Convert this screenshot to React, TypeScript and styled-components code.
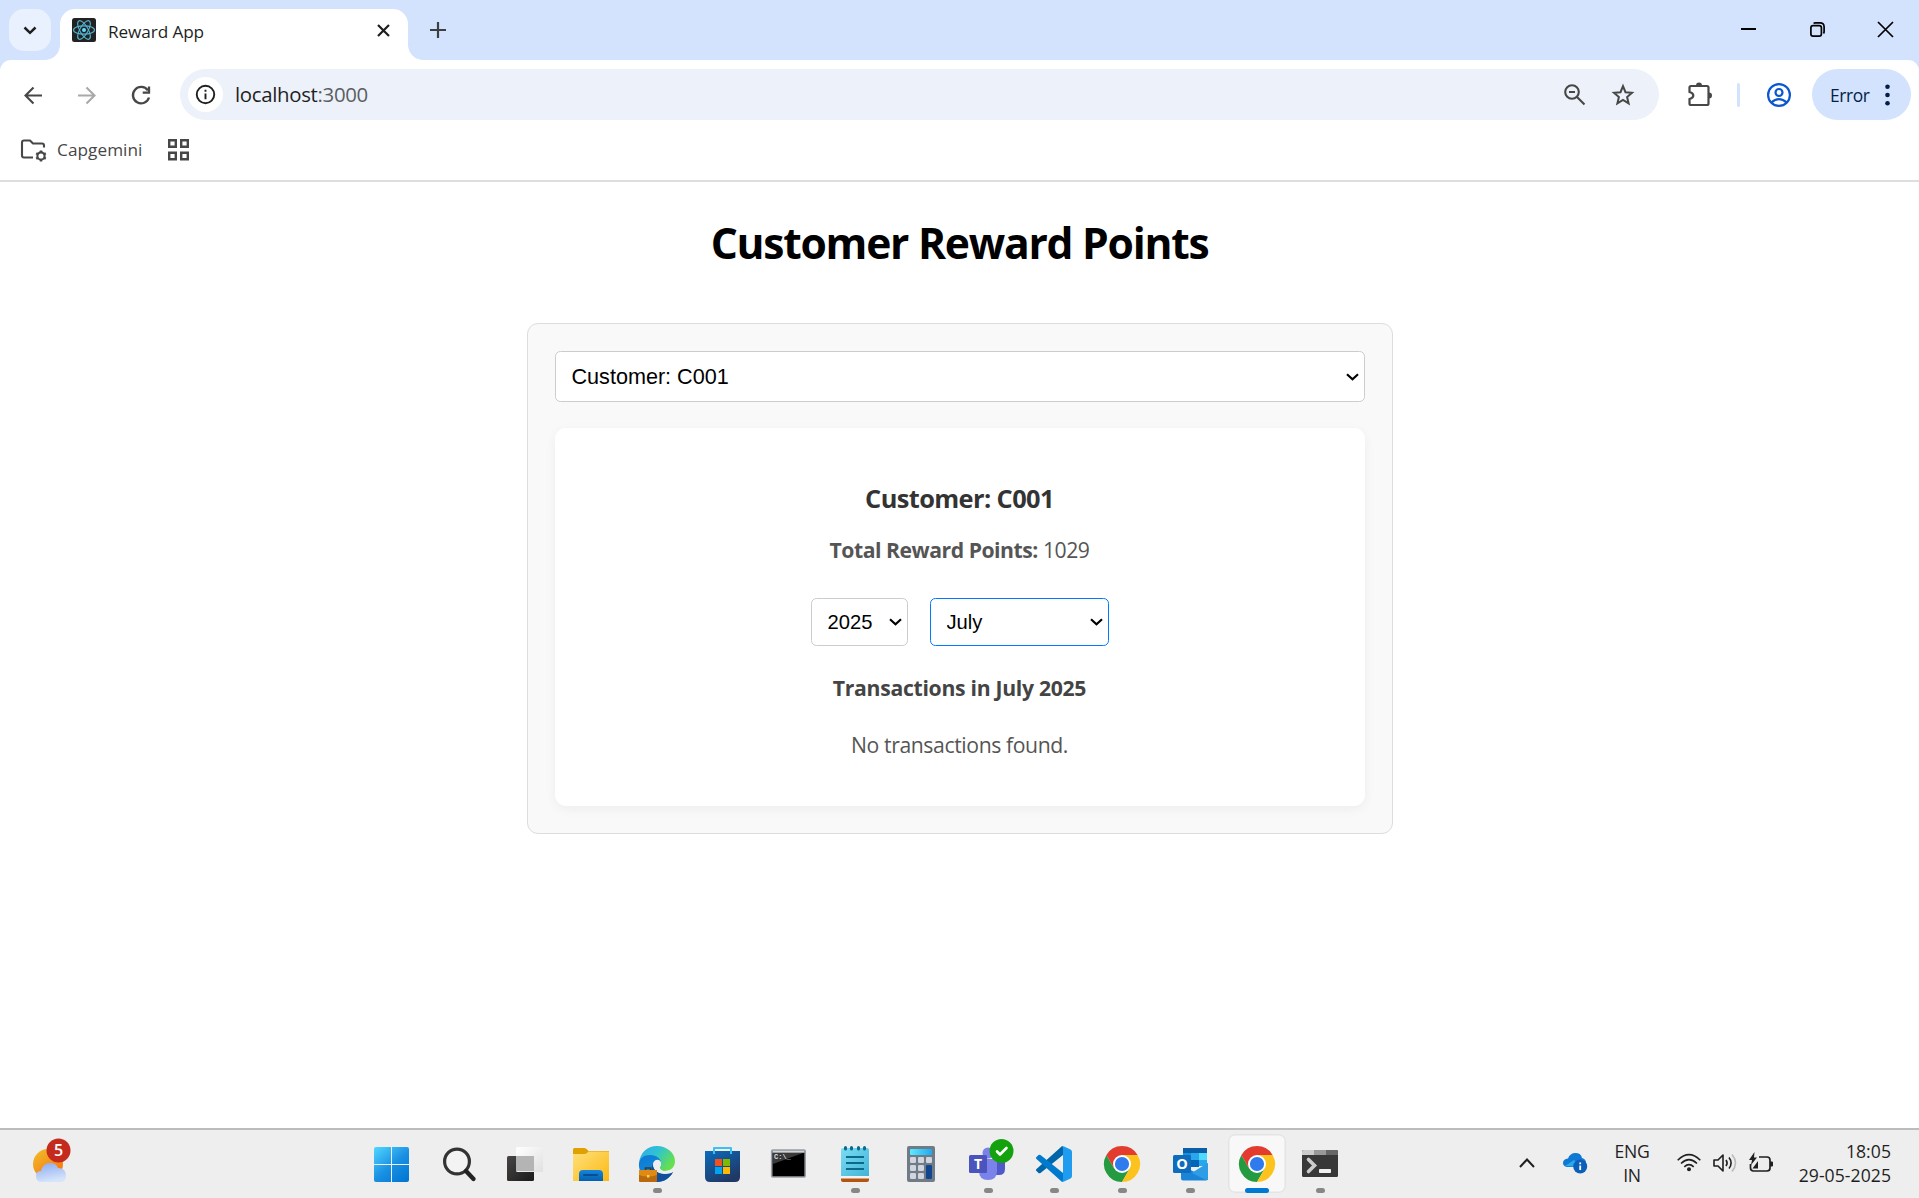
import React from "react";
import styled, { createGlobalStyle } from "styled-components";

const GlobalStyle = createGlobalStyle`
  * { box-sizing: border-box; }
  html, body { margin: 0; padding: 0; background: #fff; }
  body { overflow: hidden; }
  svg { display: block; flex: none; overflow: visible; }
`;

const ui = `"Open Sans", "Noto Sans", sans-serif`;

const Screen = styled.div`
  width: 1919px;
  height: 1198px;
  display: flex;
  flex-direction: column;
  font-family: ${ui};
  background: #fff;
`;

const Text = styled.span<{ $size: number; $track?: number; $color?: string }>`
  font-size: ${(p) => p.$size}px;
  letter-spacing: ${(p) => p.$track ?? 0}px;
  color: ${(p) => p.$color ?? "#1f1f1f"};
  white-space: nowrap;
`;

/* ---------- Browser chrome ---------- */

const TabStrip = styled.div`
  height: 60px;
  flex: none;
  display: flex;
  background: #d3e3fd;
  padding-left: 9px;
`;

const TabSearch = styled.div`
  width: 42px;
  height: 42px;
  margin: 9px -6px 0 0;
  border-radius: 15px;
  background: #e9f1fe;
  display: grid;
  place-items: center;
`;

const Flare = styled.div<{ $side: "left" | "right" }>`
  width: 15px;
  height: 15px;
  align-self: flex-end;
  background: radial-gradient(
    circle at ${(p) => (p.$side === "left" ? "0 0" : "100% 0")},
    transparent 14.5px,
    #fff 15.2px
  );
`;

const Tab = styled.div`
  width: 348px;
  height: 51px;
  margin-top: 9px;
  padding: 0 18px 9px 12px;
  display: flex;
  align-items: center;
  background: #fff;
  border-radius: 15px 15px 0 0;
`;

const TabTitle = styled(Text)`
  flex: 1;
  margin-left: 12px;
  line-height: 24px;
  padding-top: 3px;
`;

const NewTab = styled.div`
  margin: 22px auto 0 7px;
`;

const WindowControls = styled.div`
  display: flex;
  gap: 53px;
  margin: 22px 26px 0 0;
  > :first-child {
    margin-right: 1px;
  }
`;

const ToolbarShell = styled.div`
  flex: none;
  background: linear-gradient(#d3e3fd 12px, #fff 12px);
`;

const Toolbar = styled.div`
  height: 69px;
  display: flex;
  align-items: center;
  padding: 0 8px 0 21px;
  background: #fff;
  border-radius: 11px 11px 0 0;
`;

const NavButtons = styled.div`
  display: flex;
  gap: 30px;
  width: 159px;
`;

const AddressBar = styled.div`
  width: 1479px;
  height: 51px;
  margin-right: 28px;
  border-radius: 26px;
  background: #ecf1fa;
  display: flex;
  align-items: center;
  padding: 0 24px 0 8px;
`;

const SiteInfo = styled.div`
  width: 35px;
  height: 35px;
  border-radius: 50%;
  background: #fff;
  display: grid;
  place-items: center;
  margin-right: 12px;
`;

const Url = styled(Text)`
  flex: 1;
  line-height: 26px;
  padding-bottom: 2px;
  em {
    font-style: normal;
    color: #5b5e63;
  }
`;

const AddressActions = styled.div`
  display: flex;
  gap: 24px;
`;

const Divider = styled.div`
  width: 3px;
  height: 24px;
  border-radius: 2px;
  background: #d3e3fd;
  margin: 0 27px 0 24px;
`;

const ErrorPill = styled.div`
  width: 99px;
  height: 51px;
  margin-left: 21px;
  border-radius: 26px;
  background: #d3e3fd;
  display: flex;
  align-items: center;
  padding: 0 21px 0 18px;
  justify-content: space-between;
`;

const Bookmarks = styled.div`
  height: 53px;
  flex: none;
  display: flex;
  align-items: center;
  padding: 0 0 10px 20px;
  border-bottom: 2px solid #dedede;
`;

const BookmarkLabel = styled(Text)`
  margin: 0 25px 0 10px;
  width: 86px;
`;

/* ---------- Page ---------- */

const Page = styled.main`
  flex: 1;
  display: flex;
  flex-direction: column;
  align-items: center;
`;

const Title = styled.h1`
  margin: 30px 0 0;
  font-size: 42.6px;
  line-height: 60px;
  letter-spacing: -1.25px;
  font-weight: 700;
  color: #000;
  white-space: nowrap;
`;

const Panel = styled.section`
  width: 866px;
  height: 511px;
  margin-top: 51px;
  padding: 27px;
  background: #f9f9f9;
  border: 1px solid #ddd;
  border-radius: 11px;
`;

const Card = styled.div`
  height: 378px;
  margin-top: 26px;
  border-radius: 11px;
  background: #fff;
  box-shadow: 0 3px 11px rgba(0, 0, 0, 0.05);
  display: flex;
  flex-direction: column;
  align-items: center;
`;

const CardHeading = styled.h2`
  margin: 52px 0 0;
  font-size: 25.4px;
  line-height: 36px;
  letter-spacing: -0.6px;
  font-weight: 700;
  color: #333;
  white-space: nowrap;
`;

const Total = styled.p`
  margin: 19px 0 0;
  font-size: 21.2px;
  line-height: 30px;
  letter-spacing: -0.48px;
  color: #555;
  white-space: nowrap;
`;

const Filters = styled.div`
  display: flex;
  gap: 22px;
  margin: 33px 0 0;
`;

const SubHeading = styled.h3`
  margin: 27px 0 0;
  font-size: 21.2px;
  line-height: 30px;
  letter-spacing: -0.3px;
  color: #444;
  white-space: nowrap;
`;

const Empty = styled.p`
  margin: 27px 0 0;
  font-size: 21.2px;
  line-height: 30px;
  letter-spacing: -0.4px;
  color: #555;
  white-space: nowrap;
`;

const SelectBox = styled.div<{ $w: number; $h: number }>`
  display: grid;
  width: ${(p) => p.$w}px;
  height: ${(p) => p.$h}px;
  align-items: center;
  > * {
    grid-area: 1 / 1;
  }
  > svg {
    justify-self: end;
    margin-right: 6px;
    pointer-events: none;
  }
`;

const Select = styled.select<{ $size: number; $active?: boolean }>`
  appearance: none;
  width: 100%;
  height: 100%;
  padding: 0 16px;
  border: 1px solid ${(p) => (p.$active ? "#007bff" : "#ccc")};
  border-radius: 5.4px;
  background: #fff;
  color: #000;
  font-family: "Liberation Sans", Arial, sans-serif;
  font-size: ${(p) => p.$size}px;
`;

const Dropdown = ({ w, h, size, value, active }: { w: number; h: number; size: number; value: string; active?: boolean }) => (
  <SelectBox $w={w} $h={h}>
    <Select $size={size} $active={active} defaultValue={value}>
      <option>{value}</option>
    </Select>
    <svg width="13" height="8" viewBox="0 0 13 8" fill="none" stroke="#000" strokeWidth="2.2">
      <path d="M1 1.2 6.5 6.2 12 1.2" />
    </svg>
  </SelectBox>
);

/* ---------- Taskbar ---------- */

const Taskbar = styled.footer`
  height: 70px;
  flex: none;
  display: flex;
  background: #eee;
  border-top: 2px solid #bcbcbc;
`;

const Weather = styled.div`
  width: 363px;
  padding: 8px 0 0 32px;
`;

const Apps = styled.div`
  display: flex;
  width: 1156px;
  padding-top: 4px;
`;

const Slot = styled.div<{ $gap: number; $active?: boolean }>`
  width: 58px;
  height: 59px;
  margin-right: ${(p) => p.$gap}px;
  display: flex;
  flex-direction: column;
  align-items: center;
  justify-content: space-between;
  padding-top: 12px;
  border-radius: 7px;
  background: ${(p) => (p.$active ? "#f8f8f8" : "transparent")};
  box-shadow: ${(p) => (p.$active ? "inset 0 0 0 1.5px #e4e4e4" : "none")};
`;

const Indicator = styled.div<{ $kind: "none" | "open" | "focus" }>`
  width: ${(p) => (p.$kind === "focus" ? 24 : 9)}px;
  height: 5px;
  border-radius: 3px;
  background: ${(p) => (p.$kind === "none" ? "transparent" : p.$kind === "focus" ? "#0078d4" : "#878787")};
`;

const Tray = styled.div`
  flex: 1;
  display: flex;
  align-items: center;
  padding-bottom: 2px;
`;

const TrayStack = styled.div<{ $w: number; $align: string; $ml: number }>`
  width: ${(p) => p.$w}px;
  margin-left: ${(p) => p.$ml}px;
  padding-top: 1px;
  display: flex;
  flex-direction: column;
  align-items: ${(p) => p.$align};
  line-height: 23.5px;
`;

const TrayIcon = styled.svg<{ $ml: number }>`
  margin-left: ${(p) => p.$ml}px;
`;

const I = ({ children }: { children: React.ReactNode }) => (
  <svg width="36" height="36" viewBox="0 0 36 36">{children}</svg>
);

const Windows = () => (
  <I>
    <defs>
      <linearGradient id="win" gradientUnits="userSpaceOnUse" x1="1" y1="1" x2="30" y2="36">
        <stop offset="0" stopColor="#4fd5ff" /><stop offset=".55" stopColor="#1a90e2" /><stop offset="1" stopColor="#0078d4" />
      </linearGradient>
    </defs>
    <path fill="url(#win)" d="M2 1h15v17H0V3q0-2 2-2zM18 1h15q2 0 2 2v15H18zM0 19h17v17H2q-2 0-2-2zM18 19h17v15q0 2-2 2H18z" />
  </I>
);

const Search = () => (
  <I>
    <circle cx="16" cy="15.5" r="12.4" fill="#f3f3f3" stroke="#333" strokeWidth="3.2" />
    <path d="m25 25 7.5 8" stroke="#222" strokeWidth="4.4" strokeLinecap="round" />
  </I>
);

const TaskView = () => (
  <I>
    <defs>
      <linearGradient id="tvd" x2="1" y2="1"><stop stopColor="#484644" /><stop offset="1" stopColor="#1b1b1b" /></linearGradient>
      <linearGradient id="tvl" x2="1" y2="1"><stop stopColor="#fff" /><stop offset="1" stopColor="#e0e0e0" /></linearGradient>
    </defs>
    <rect y="10" width="27" height="25" rx="1.5" fill="url(#tvd)" />
    <rect x="9" y="1" width="27" height="25" rx="1.5" fill="url(#tvl)" />
    <path d="M9 10h18v15H9z" fill="#b4b4b4" />
  </I>
);

const Explorer = () => (
  <I>
    <defs>
      <linearGradient id="exf" x2="1" y2="1"><stop stopColor="#ffe07a" /><stop offset="1" stopColor="#fbb914" /></linearGradient>
      <linearGradient id="exb" y2="1" x2="0"><stop stopColor="#1585dc" /><stop offset="1" stopColor="#0561b0" /></linearGradient>
    </defs>
    <path d="M0 3.5Q0 2 1.5 2h9.5q1.5 0 2.5 1l2 2H36v10H0z" fill="#dfa000" />
    <path d="M0 8h11q2 0 3-1l1.5-1.500H36V35H0z" fill="url(#exf)" />
    <path d="M6 35v-7q0-4 4-4h16q4 0 4 4v7z" fill="url(#exb)" />
    <path d="M11 29h13" stroke="#064f91" strokeWidth="2" strokeLinecap="round" />
  </I>
);

const Edge = () => (
  <I>
    <defs>
      <linearGradient id="edt" x2="1" y2=".5"><stop stopColor="#2fa8e8" /><stop offset=".5" stopColor="#2fc2d4" /><stop offset="1" stopColor="#66e04e" /></linearGradient>
      <linearGradient id="edl" x2=".6" y2="1"><stop stopColor="#1078d0" /><stop offset="1" stopColor="#0c94e4" /></linearGradient>
    </defs>
    <path d="M0 17C1 7 8 0 18 0s18 7 18 15c0 6-4 10-10 10-4 0-6-2-5-4 1-1 1-2 1-3 0-4-4-8-10-8C6 10 1 13 0 17z" fill="url(#edt)" />
    <path d="M0 17c1-5 5-8 11-8 7 0 11 4 11 8-1-3-7-4-8 1-1 6 5 10 12 10 4 0 7-1 8-2-3 6-9 10-16 10C8 36-1 28 0 17z" fill="url(#edl)" />
    <path d="M14 18c0 7 6 10 12 10 4 0 7-1 8-2-3 6-9 10-16 10-5 0-8-10-4-18z" fill="#104f9c" />
    <path d="M14.500 17c1-4 6-4 7.200-1 .6 2-.2 3.500-.7 4.500-.8 2.500 2 4.500 5 4.500 3 0 6-1 8-3l.3 3c-2 1.700-5 2.700-8.300 2.700-7 0-12.500-4-11.500-10.700z" fill="#eee" />
    <rect y="24" width="18" height="12" rx="1" fill="#b96a0c" />
    <path d="M0 24h18v5q-9 3-18 0z" fill="#e08a16" />
    <path d="M6.5 24v-2h5v2" stroke="#4b3620" strokeWidth="1.5" fill="none" />
    <path d="M8 29h2.4v2.5H8z" fill="#ffd45a" />
  </I>
);

const Store = () => (
  <I>
    <defs>
      <linearGradient id="sto" x2=".6" y2="1"><stop stopColor="#0a6cbd" /><stop offset="1" stopColor="#203864" /></linearGradient>
    </defs>
    <path d="M9 8V2h17v6" fill="none" stroke="#3cc0f3" strokeWidth="2" strokeLinejoin="round" />
    <path d="M0 5h35v26q0 5-5 5H5q-5 0-5-5z" fill="url(#sto)" />
    <path d="M9 8V4.5M26 8V4.5" stroke="#3cc0f3" strokeWidth="2" />
    <path d="M10 13h7v7h-7z" fill="#f25022" /><path d="M18 13h7v7h-7z" fill="#7fba00" />
    <path d="M10 21h7v7h-7z" fill="#00a4ef" /><path d="M18 21h7v7h-7z" fill="#ffb900" />
  </I>
);

const Mono = styled.text`
  font-family: "Liberation Mono", monospace;
  font-weight: 700;
  font-size: 7px;
  fill: #ddd;
`;

const Cmd = () => (
  <I>
    <rect x=".7" y="4" width="33.5" height="27" rx="1" fill="#000" stroke="#9aa0a6" strokeWidth="1.6" />
    <path d="M1.5 4.5h32v2.2h-32z" fill="#cfd4d8" />
    <path d="M2 7h30L2 18z" fill="#3a3a3a" />
    <Mono x="3" y="13">C:\_</Mono>
  </I>
);

const Notepad = () => (
  <I>
    <defs><linearGradient id="npd" x2="1" y2="1"><stop stopColor="#7cdcf4" /><stop offset="1" stopColor="#42b4d6" /></linearGradient></defs>
    <path d="M4 31h28v3q0 2-2 2H6q-2 0-2-2z" fill="#b5540f" />
    <path d="M4 29h28v3.5H4z" fill="#f3f3f3" />
    <path d="M4 4q0-2 2-2h24q2 0 2 2v26H4z" fill="url(#npd)" />
    <path d="M9 11h18M9 17h18M9 23h18" stroke="#0b6a8c" strokeWidth="2" />
    <path d="M8.5 1.5v1.5M14.5 1.5v1.5M21.5 1.5v1.5M27.5 1.5v1.5" stroke="#0b6a8c" strokeWidth="3" strokeLinecap="round" />
  </I>
);

const Calculator = () => (
  <I>
    <defs><linearGradient id="cal" x2="1"><stop stopColor="#5deaff" /><stop offset="1" stopColor="#22a8ec" /></linearGradient></defs>
    <rect x="4" width="28" height="36" rx="2" fill="#6f7b85" />
    <rect x="7" y="3" width="22" height="6" rx="1" fill="url(#cal)" />
    {[7, 15, 23].map((x) => [11, 19, 27].map((y) => (x === 23 && y > 11 ? null : <rect key={`${x}-${y}`} x={x} y={y} width="6" height="6" rx="1.2" fill="#d0d5e0" />)))}
    <rect x="23" y="19" width="6" height="14" rx="1.2" fill="#11468f" />
  </I>
);

const Glyph = styled.text<{ $size: number }>`
  font-family: ${ui};
  font-weight: 700;
  font-size: ${(p) => p.$size}px;
  fill: #fff;
  text-anchor: middle;
`;

const Teams = () => (
  <I>
    <circle cx="29" cy="9" r="4" fill="#5059c9" />
    <circle cx="18" cy="7" r="5.5" fill="#7b83eb" />
    <path d="M22 13h13v10q0 6-6 6h-7z" fill="#5059c9" />
    <path d="M9 13h18v12q0 9-9 9t-9-9z" fill="#7b83eb" />
    <rect x="-1" y="9" width="18" height="18" rx="1.5" fill="#4b53bc" />
    <Glyph $size={14} x="8" y="23">T</Glyph>
    <circle cx="31.5" cy="5" r="12" fill="#13a10e" />
    <path d="m27 5.5 3 3 6.5-6.5" fill="none" stroke="#fff" strokeWidth="2.6" strokeLinecap="round" strokeLinejoin="round" />
  </I>
);

const VsCode = () => (
  <I>
    <path d="M0 24.5 2.5 27q1 .7 2 0L27 9V0q-1 0-2 1L.5 23q-.8.8-.5 1.5z" fill="#0065a9" />
    <path d="M0 11.5 2.5 9q1-.7 2 0L27 27v9q-1 0-2-1L.5 13q-.8-.8-.5-1.5z" fill="#007acc" />
    <path d="M25 35.2q1.5 1.2 3 .4l6.5-3.2q1.5-.8 1.5-2.400V6q0-1.600-1.500-2.400L28 .4Q26.5-.4 25 .8q2-.6 2 1.600v31.200q0 2.200-2 1.600z" fill="#1f9cf0" />
  </I>
);

const Chrome = () => (
  <I>
    <path d="M2.410 9A18 18 0 0 1 33.590 9L18 18z" fill="#e33b2e" />
    <path d="M2.410 9A18 18 0 0 0 18 36L25.800 22.500 10.200 22.500z" fill="#249a41" />
    <path d="M33.590 9A18 18 0 0 1 18 36L25.800 22.500 18 9z" fill="#fcc31e" />
    <path d="M2.410 9 10.200 22.500 18 9z" fill="#e33b2e" />
    <circle cx="18" cy="18" r="9" fill="#fff" />
    <circle cx="18" cy="18" r="7.1" fill="#2f7bee" />
  </I>
);

const Outlook = () => (
  <I>
    <path d="M11 2h24v17H11z" fill="#1490df" />
    <path d="M11 2h24v5H11z" fill="#0a5ea8" />
    <path d="M19 7h8v7h-8z" fill="#28a8ea" /><path d="M27 7h8v7h-8z" fill="#50d9ff" />
    <path d="M11 14h16v7H11z" fill="#0364b8" /><path d="M27 14h8v6h-8z" fill="#28a8ea" />
    <path d="m36 17-18 11L36 34z" fill="#3aa7e8" />
    <path d="M9 19l27 14q-1 1.500-2 1.500H11q-2 0-2-2z" fill="#1a85d8" />
    <path d="M36 17v15q0 2-2 2L20 27z" fill="#2f9de6" />
    <rect x="1" y="9" width="18" height="18" rx="1.5" fill="#0f6cbd" />
    <Glyph $size={14.5} x="10" y="23.3">O</Glyph>
  </I>
);

const Terminal = () => (
  <I>
    <rect y="4" width="36" height="27" rx="1.5" fill="#383838" />
    <path d="M0 9V5.5Q0 4 1.5 4H12v5z" fill="#ccc" /><path d="M12 4h12v5H12z" fill="#999" /><path d="M24 4h10.5Q36 4 36 5.5V9H24z" fill="#666" />
    <path d="m6.5 13.5 6 6-6 6" fill="none" stroke="#ccc" strokeWidth="3.6" strokeLinecap="round" />
    <rect x="17" y="23" width="12" height="4" rx=".8" fill="#f0f0f0" />
  </I>
);

type TaskbarApp = { icon: React.ReactNode; gap: number; kind: "none" | "open" | "focus" };

const apps: TaskbarApp[] = [
  { icon: <Windows />, gap: 9, kind: "none" },
  { icon: <Search />, gap: 8, kind: "none" },
  { icon: <TaskView />, gap: 8, kind: "none" },
  { icon: <Explorer />, gap: 8, kind: "none" },
  { icon: <Edge />, gap: 8, kind: "open" },
  { icon: <Store />, gap: 8, kind: "none" },
  { icon: <Cmd />, gap: 8, kind: "none" },
  { icon: <Notepad />, gap: 8, kind: "open" },
  { icon: <Calculator />, gap: 9, kind: "none" },
  { icon: <Teams />, gap: 8, kind: "open" },
  { icon: <VsCode />, gap: 10, kind: "open" },
  { icon: <Chrome />, gap: 10, kind: "open" },
  { icon: <Outlook />, gap: 9, kind: "open" },
  { icon: <Chrome />, gap: 5, kind: "focus" },
  { icon: <Terminal />, gap: 0, kind: "open" },
];

const ReactLogo = () => (
  <svg width="24" height="24" viewBox="0 0 24 24">
    <rect width="24" height="24" rx="2.5" fill="#222" />
    <g fill="none" stroke="#53b7d3" strokeWidth="1.1">
      {[0, 60, 120].map((a) => <ellipse key={a} cx="12" cy="12" rx="10.5" ry="4.1" transform={`rotate(${a} 12 12)`} />)}
    </g>
    <circle cx="12" cy="12" r="2" fill="#61dafb" />
  </svg>
);

export default function App() {
  return (
    <Screen>
      <GlobalStyle />
      <TabStrip>
        <TabSearch>
          <svg width="14" height="9" viewBox="0 0 14 9" fill="none" stroke="#1f1f1f" strokeWidth="2.5"><path d="m1.5 1.5 5.5 5.3 5.5-5.3" /></svg>
        </TabSearch>
        <Flare $side="left" />
        <Tab>
          <ReactLogo />
          <TabTitle $size={17.2} $track={-0.1}>Reward App</TabTitle>
          <svg width="13" height="13" viewBox="0 0 13 13" stroke="#1f1f1f" strokeWidth="2.2"><path d="m1 1 11 11M12 1 1 12" /></svg>
        </Tab>
        <Flare $side="right" />
        <NewTab>
          <svg width="16" height="16" viewBox="0 0 16 16" stroke="#3c4043" strokeWidth="2.2"><path d="M8 0v16M0 8h16" /></svg>
        </NewTab>
        <WindowControls>
          <svg width="15" height="15" viewBox="0 0 15 15" stroke="#000" strokeWidth="2"><path d="M0 7h15" /></svg>
          <svg width="15" height="15" viewBox="0 0 15 15" fill="none" stroke="#000" strokeWidth="1.7"><rect x=".9" y="3.6" width="10.5" height="10.5" rx="2.2" /><path d="M3.5 1.4Q4.2.9 5.5.9H10q4.1 0 4.1 4.100v4.500q0 1.300-.6 2" /></svg>
          <svg width="15" height="15" viewBox="0 0 15 15" stroke="#000" strokeWidth="1.7"><path d="m0 0 15 15M15 0 0 15" /></svg>
        </WindowControls>
      </TabStrip>

      <ToolbarShell>
        <Toolbar>
          <NavButtons>
            <svg width="24" height="24" viewBox="0 0 24 24" fill="none" stroke="#474747" strokeWidth="2.1"><path d="M21 12.500H5M12.500 4.500l-8 8 8 8" /></svg>
            <svg width="24" height="24" viewBox="0 0 24 24" fill="none" stroke="#a9a9a9" strokeWidth="2.1"><path d="M3 12.500h16M11.500 4.500l8 8-8 8" /></svg>
            <svg width="24" height="24" viewBox="0 0 24 24" fill="none" stroke="#474747" strokeWidth="2.3"><path d="M18.800 7.300A8.200 8.200 0 1 0 20 14.500M20 3.500V9.600h-6.300" /></svg>
          </NavButtons>
          <AddressBar>
            <SiteInfo>
              <svg width="19" height="19" viewBox="0 0 20 20" fill="none" stroke="#1f1f1f" strokeWidth="2"><circle cx="10" cy="10" r="9.2" /><path d="M10 9v6M10 5v2" /></svg>
            </SiteInfo>
            <Url $size={20.4} $track={-0.32}>localhost<em>:3000</em></Url>
            <AddressActions>
              <svg width="24" height="24" viewBox="0 0 24 24" fill="none" stroke="#474747" strokeWidth="2.1"><circle cx="9" cy="9" r="6.8" /><path d="m14 14 7.500 7.500M6 9h6" /></svg>
              <svg width="24" height="24" viewBox="0 0 24 24" fill="none" stroke="#474747" strokeWidth="2"><path d="m12 3.200 2.500 6 6.500.6-4.900 4.200 1.500 6.300-5.600-3.400-5.600 3.400L7.900 14 3 9.800l6.500-.6z" /></svg>
            </AddressActions>
          </AddressBar>
          <svg width="26" height="26" viewBox="0 0 26 26" fill="none" stroke="#474747" strokeWidth="2.2"><path d="M4 4h16q1.500 0 1.500 1.500v16q0 1.500-1.500 1.500H4q-1.500 0-1.500-1.500v-4.500q3.800-1 3.800-3.500T2.500 10V5.500Q2.500 4 4 4z" /><path d="M9 3.500a3 3 0 0 1 6 0zM22 10.500a3 3 0 0 1 0 6z" fill="#474747" stroke="none" /></svg>
          <Divider />
          <svg width="24" height="24" viewBox="0 0 24 24" fill="none" stroke="#0b57d0" strokeWidth="2.2"><circle cx="12" cy="12" r="10.9" /><circle cx="12" cy="9.5" r="3.5" /><path d="M4.500 19.500q3.500-3.300 7.500-3.300t7.500 3.300" /></svg>
          <ErrorPill>
            <Text $size={17.4} $track={-0.4} $color="#041e49">Error</Text>
            <svg width="5" height="22" viewBox="0 0 5 22" fill="#041e49"><circle cx="2.5" cy="2.7" r="2.3" /><circle cx="2.5" cy="11" r="2.3" /><circle cx="2.5" cy="19.3" r="2.3" /></svg>
          </ErrorPill>
        </Toolbar>
      </ToolbarShell>

      <Bookmarks>
        <svg width="27" height="24" viewBox="0 0 27 24" fill="none" stroke="#474747" strokeWidth="2.1" strokeLinejoin="round"><path d="M13 19.500H4q-2 0-2-2v-13q0-2 2-2h6l3 3h9q2 0 2 2v2" /><circle cx="21" cy="18" r="3.6" /><path strokeWidth="2.4" d="M21 12.500v2M21 21.500v2M16.200 15.200l1.800 1M24 19.800l1.800 1M16.200 20.800l1.800-1M24 16.200l1.800-1" /></svg>
        <BookmarkLabel $size={17.2} $track={0.05} $color="#474747">Capgemini</BookmarkLabel>
        <svg width="22" height="22" viewBox="0 0 22 22" fill="none" stroke="#474747" strokeWidth="2.4"><path d="M1.200 1.200h6.600v6.600H1.200zM13.200 1.200h6.600v6.600h-6.600zM1.200 13.700h6.600v6.600H1.200zM13.200 13.700h6.600v6.600h-6.600z" /></svg>
      </Bookmarks>

      <Page>
        <Title>Customer Reward Points</Title>
        <Panel>
          <Dropdown w={810} h={51} size={21.6} value="Customer: C001" />
          <Card>
            <CardHeading>Customer: C001</CardHeading>
            <Total><strong>Total Reward Points:</strong> 1029</Total>
            <Filters>
              <Dropdown w={97} h={48} size={20.2} value="2025" />
              <Dropdown w={179} h={48} size={20.2} value="July" active />
            </Filters>
            <SubHeading>Transactions in July 2025</SubHeading>
            <Empty>No transactions found.</Empty>
          </Card>
        </Panel>
      </Page>

      <Taskbar>
        <Weather>
          <svg width="40" height="46" viewBox="0 0 40 46">
            <defs>
              <linearGradient id="sun" x2=".8" y2="1"><stop stopColor="#efc02c" /><stop offset="1" stopColor="#f9700f" /></linearGradient>
              <linearGradient id="cloud" x2=".3" y2="1"><stop stopColor="#89aaf0" /><stop offset="1" stopColor="#d5e3fb" /></linearGradient>
            </defs>
            <circle cx="16" cy="26" r="15" fill="url(#sun)" />
            <path d="M10 44q-6 0-6-6 0-5 5-5 2-8 9-8 6 0 8 5 8 0 8 8 0 6-6 6z" fill="url(#cloud)" />
            <circle cx="26.5" cy="12.5" r="12" fill="#c42b1c" />
            <text x="26.5" y="18" textAnchor="middle" fontFamily="Open Sans" fontWeight="600" fontSize="16" fill="#fff">5</text>
          </svg>
        </Weather>
        <Apps>
          {apps.map((a, i) => (
            <Slot key={i} $gap={a.gap} $active={a.kind === "focus"}>
              {a.icon}
              <Indicator $kind={a.kind} />
            </Slot>
          ))}
        </Apps>
        <Tray>
          <svg width="16" height="10" viewBox="0 0 16 10" fill="none" stroke="#1f1f1f" strokeWidth="2"><path d="m1 9 7-7.500L15 9" /></svg>
          <TrayIcon $ml={28} width="24" height="20" viewBox="0 0 24 20">
            <path d="M4 14q-4-1-4-4 0-4 5-4.500Q7 0 12.500 0 18 0 19 5q4 1 4 5v4z" fill="#0f78d4" />
            <path d="M2 13 11 7l8 7z" fill="#29a9ee" />
            <circle cx="17.2" cy="13.5" r="7" fill="#0c5fb8" />
            <path d="M17.200 12.500v4.500M17.200 9.500v1.800" stroke="#fff" strokeWidth="1.8" />
          </TrayIcon>
          <TrayStack $w={40} $align="center" $ml={25}>
            <Text $size={17.6} $track={-0.3}>ENG</Text>
            <Text $size={17.6} $track={-0.3}>IN</Text>
          </TrayStack>
          <TrayIcon $ml={25} width="24" height="18" viewBox="0 0 24 18" fill="none" stroke="#1f1f1f" strokeWidth="1.6">
            <path d="M.7 6.200q11.300-11 22.600 0M4 9.500q8-7.600 16 0M7.300 12.800q4.700-4.300 9.400 0" />
            <circle cx="12" cy="15.3" r="2" fill="#1f1f1f" stroke="none" />
          </TrayIcon>
          <TrayIcon $ml={12} width="24" height="20" viewBox="0 0 24 20" fill="none" stroke="#1f1f1f" strokeWidth="1.6" strokeLinejoin="round">
            <path d="M1 7h4l5-5v16l-5-5H1z" /><path d="M13 7q2.200 3 0 6M16 4.500q4.200 5.500 0 11" /><path d="M19 1.500q7 8.500 0 17" stroke="#bbb" />
          </TrayIcon>
          <TrayIcon $ml={12} width="24" height="20" viewBox="0 0 24 20" fill="none" stroke="#1f1f1f" strokeWidth="1.7">
            <path d="M10 4h8q3 0 3 3v8q0 3-3 3H4.500q-3 0-3-3v-4" />
            <path d="M21 8.500h2q1 0 1 1v3q0 1-1 1h-2zM9 8v7.500H3.500z" fill="#1f1f1f" stroke="none" />
            <path d="M5.500-1 0 7h3l-1 5 6-7.500H5z" fill="#1f1f1f" stroke="none" />
          </TrayIcon>
          <TrayStack $w={101} $align="flex-end" $ml={17}>
            <Text $size={17.6} $track={0.05}>18:05</Text>
            <Text $size={17.6} $track={0.05}>29-05-2025</Text>
          </TrayStack>
        </Tray>
      </Taskbar>
    </Screen>
  );
}
